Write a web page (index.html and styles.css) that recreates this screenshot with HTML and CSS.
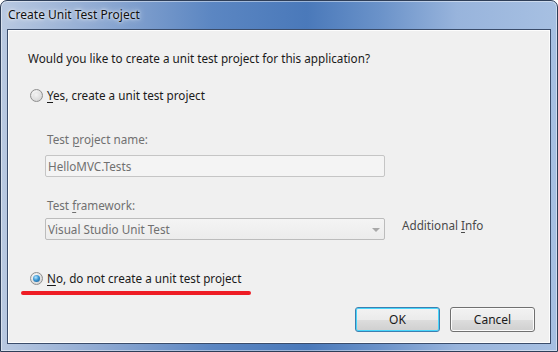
FILE: index.html
```html
<!DOCTYPE html>
<html>
<head>
<meta charset="utf-8">
<link rel="stylesheet" href="styles.css">
</head>
<body>
<div class="window">
  <div class="titlebar">Create Unit Test Project</div>
  <div class="panel">
    <div class="question">Would you like to create a unit test project for this application?</div>
    <label class="radio-row yes"><span class="radio"></span><span><u>Y</u>es, create a unit test project</span></label>
    <div class="field-label first">Test <u>p</u>roject name:</div>
    <div class="textbox">HelloMVC.Tests</div>
    <div class="field-label second">Test <u>f</u>ramework:</div>
    <div class="combo-row">
      <div class="combo"><span>Visual Studio Unit Test</span><span class="arrow"></span></div>
      <div class="info">Additional <u>I</u>nfo</div>
    </div>
    <label class="radio-row no"><span class="radio checked"></span><span><u>N</u>o, do not create a unit test project</span></label>
    <div class="redline"></div>
    <div class="buttons">
      <button class="btn ok">OK</button>
      <button class="btn">Cancel</button>
    </div>
  </div>
</div>
</body>
</html>
```
FILE: styles.css
```css
* { box-sizing: border-box; }
html, body { margin: 0; padding: 0; }
body {
  width: 558px; height: 352px; overflow: hidden;
  background: #ffffff;
  font-family: "Noto Sans", "Open Sans", sans-serif;
  font-size: 11.7px;
  color: #1a1a1a;
}
u { text-decoration: underline; text-underline-offset: 2px; }
.window {
  width: 558px; height: 352px;
  display: flex; flex-direction: column;
  border: 1px solid #2e3e58;
  border-radius: 7px 7px 0 0;
  background: linear-gradient(to right, #b9c9e1 0%, #8ea9d2 18%, #5b86c2 38%, #4a79ba 55%, #6a92c9 68%, #98b4dc 82%, #a7c0e2 100%);
  box-shadow: inset 0 0 0 1px rgba(255,255,255,0.45);
}
.titlebar {
  height: 28px;
  padding-left: 7px;
  line-height: 28px;
  font-size: 12px;
  color: #111;
  text-shadow: 0 0 6px rgba(255,255,255,0.9), 0 0 3px rgba(255,255,255,0.9);
}
.panel {
  position: relative;
  flex: 1;
  margin: 0 6px 7px 6px;
  background: #f0f0f0;
  border: 1px solid #3b4d6b;
  box-shadow: inset 0 0 0 1px #fdfdfd;
  display: flex; flex-direction: column;
  padding: 20px 15px 11px 20px;
  line-height: 16px;
}
.question { height: 16px; white-space: nowrap; }
.radio-row {
  display: flex; align-items: center; gap: 4px;
  height: 16px; margin-left: 2px; white-space: nowrap;
}
.radio-row.yes { margin-top: 21px; }
.radio-row.no { margin-top: 30px; }
.radio {
  width: 13px; height: 13px; border-radius: 50%;
  border: 1px solid #8f8f8f;
  background: radial-gradient(circle at 40% 35%, #ffffff 0%, #e6e6e6 45%, #c9c9c9 100%);
  position: relative;
  flex: none;
}
.radio::after {
  content: ""; position: absolute; left: 2px; top: 2px; width: 7px; height: 7px; border-radius: 50%;
  background: radial-gradient(circle at 45% 40%, #f4f4f4, #d8d8d8);
}
.radio.checked::after {
  background: radial-gradient(circle at 40% 35%, #b6e6ff 0%, #3c97d3 45%, #10508a 100%);
}
.field-label { color: #707070; height: 16px; margin-left: 19px; white-space: nowrap; }
.field-label.first { margin-top: 28px; }
.field-label.second { margin-top: 20px; }
.textbox {
  margin-top: 8px; margin-left: 17px;
  width: 340px; height: 22px;
  border: 1px solid #c5c5c5; border-radius: 2px;
  background: #f4f4f4;
  color: #707070;
  padding-left: 2px; line-height: 20px;
}
.combo-row { display: flex; align-items: flex-start; gap: 17px; margin-top: 5px; margin-left: 17px; }
.combo {
  width: 340px; height: 22px;
  border: 1px solid #bcbcbc; border-radius: 2px;
  background: linear-gradient(#f4f4f4, #ececec);
  color: #707070;
  padding-left: 2px; line-height: 20px;
  display: flex; justify-content: space-between; align-items: center;
}
.arrow {
  width: 0; height: 0; margin-right: 4px; margin-top: 2px;
  border-left: 4px solid transparent; border-right: 4px solid transparent;
  border-top: 4px solid #a8a8a8;
}
.info { color: #4a4a4a; margin-top: -1px; white-space: nowrap; }
.redline {
  position: absolute; left: 13px; top: 261px;
  width: 230px; height: 4px; border-radius: 2px;
  background: #ee1c24;
}
.buttons { margin-top: auto; display: flex; justify-content: flex-end; gap: 10px; }
.btn {
  width: 85px; height: 25px;
  font-family: inherit; font-size: 12px; color: #1a1a1a;
  border: 1px solid #707070; border-radius: 3px;
  background: linear-gradient(#f2f2f2 0%, #ebebeb 50%, #dddddd 51%, #cfcfcf 100%);
  box-shadow: inset 0 0 0 1px #fbfbfb;
  padding: 0;
}
.btn.ok { border-color: #3c7fb1; box-shadow: inset 0 0 0 1px #48d6fb; }
```
